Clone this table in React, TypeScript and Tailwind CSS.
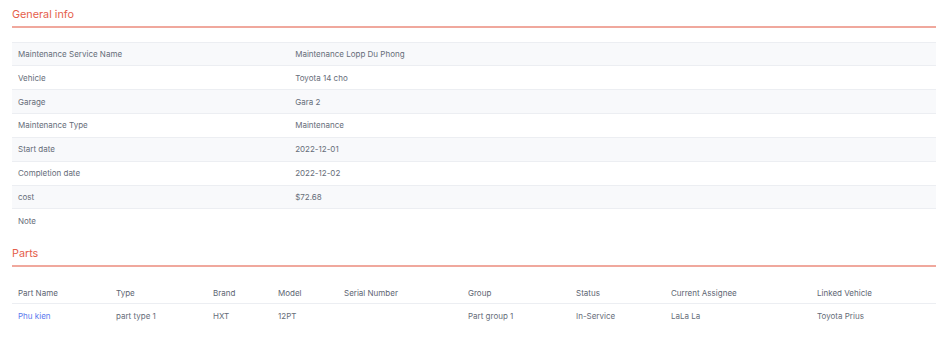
import React from 'react';

const generalInfo: { label: string; value: string }[] = [
  { label: 'Maintenance Service Name', value: 'Maintenance Lopp Du Phong' },
  { label: 'Vehicle', value: 'Toyota 14 cho' },
  { label: 'Garage', value: 'Gara 2' },
  { label: 'Maintenance Type', value: 'Maintenance' },
  { label: 'Start date', value: '2022-12-01' },
  { label: 'Completion date', value: '2022-12-02' },
  { label: 'cost', value: '$72.68' },
  { label: 'Note', value: '' },
];

const partColumns = [
  { title: 'Part Name', width: 'w-[98px]' },
  { title: 'Type', width: 'w-[97px]' },
  { title: 'Brand', width: 'w-[65px]' },
  { title: 'Model', width: 'w-[66px]' },
  { title: 'Serial Number', width: 'w-[124px]' },
  { title: 'Group', width: 'w-[108px]' },
  { title: 'Status', width: 'w-[95px]' },
  { title: 'Current Assignee', width: 'w-[146px]' },
  { title: 'Linked Vehicle', width: '' },
];

const parts = [
  {
    name: 'Phu kien',
    type: 'part type 1',
    brand: 'HXT',
    model: '12PT',
    serial: '',
    group: 'Part group 1',
    status: 'In-Service',
    assignee: 'LaLa La',
    vehicle: 'Toyota Prius',
  },
];

const SectionTitle: React.FC<{ title: string }> = ({ title }) => (
  <div className="border-b-2 border-[#f0a89d] pb-[4px]">
    <h3 className="text-[10.8px] leading-[14px] text-[#e5604b]">{title}</h3>
  </div>
);

const App: React.FC = () => {
  return (
    <div className="w-[940px] h-[347px] bg-white pl-3 pr-1 pt-[7.5px] text-[#666d79] font-['Inter',sans-serif] text-[8px]">
      <SectionTitle title="General info" />

      <table className="w-full mt-[14px] border-collapse">
        <tbody>
          {generalInfo.map((row, i) => (
            <tr
              key={row.label}
              className={`${i % 2 === 0 ? 'bg-[#f8f9fb]' : 'bg-white'} ${i < generalInfo.length - 1 ? 'border-b border-[#eceef2]' : ''} ${i === 0 ? 'border-t border-[#eceef2]' : ''}`}
            >
              <td className="w-[30%] h-[23.85px] px-[6px] align-middle">{row.label}</td>
              <td className="h-[23.85px] px-[6px] align-middle">{row.value}</td>
            </tr>
          ))}
        </tbody>
      </table>

      <div className="mt-[14px]">
        <SectionTitle title="Parts" />
      </div>

      <table className="w-full mt-[15px] border-collapse">
        <thead>
          <tr className="border-b border-[#eceef2]">
            {partColumns.map((col) => (
              <th key={col.title} className={`${col.width} h-[22px] px-[6px] text-left font-normal text-[#5d6572]`}>
                {col.title}
              </th>
            ))}
          </tr>
        </thead>
        <tbody>
          {parts.map((p) => (
            <tr key={p.name}>
              <td className="h-[23px] px-[6px] text-[#5b78ee]">{p.name}</td>
              <td className="px-[6px]">{p.type}</td>
              <td className="px-[6px]">{p.brand}</td>
              <td className="px-[6px]">{p.model}</td>
              <td className="px-[6px]">{p.serial}</td>
              <td className="px-[6px]">{p.group}</td>
              <td className="px-[6px]">{p.status}</td>
              <td className="px-[6px]">{p.assignee}</td>
              <td className="px-[6px]">{p.vehicle}</td>
            </tr>
          ))}
        </tbody>
      </table>
    </div>
  );
};

export default App;
